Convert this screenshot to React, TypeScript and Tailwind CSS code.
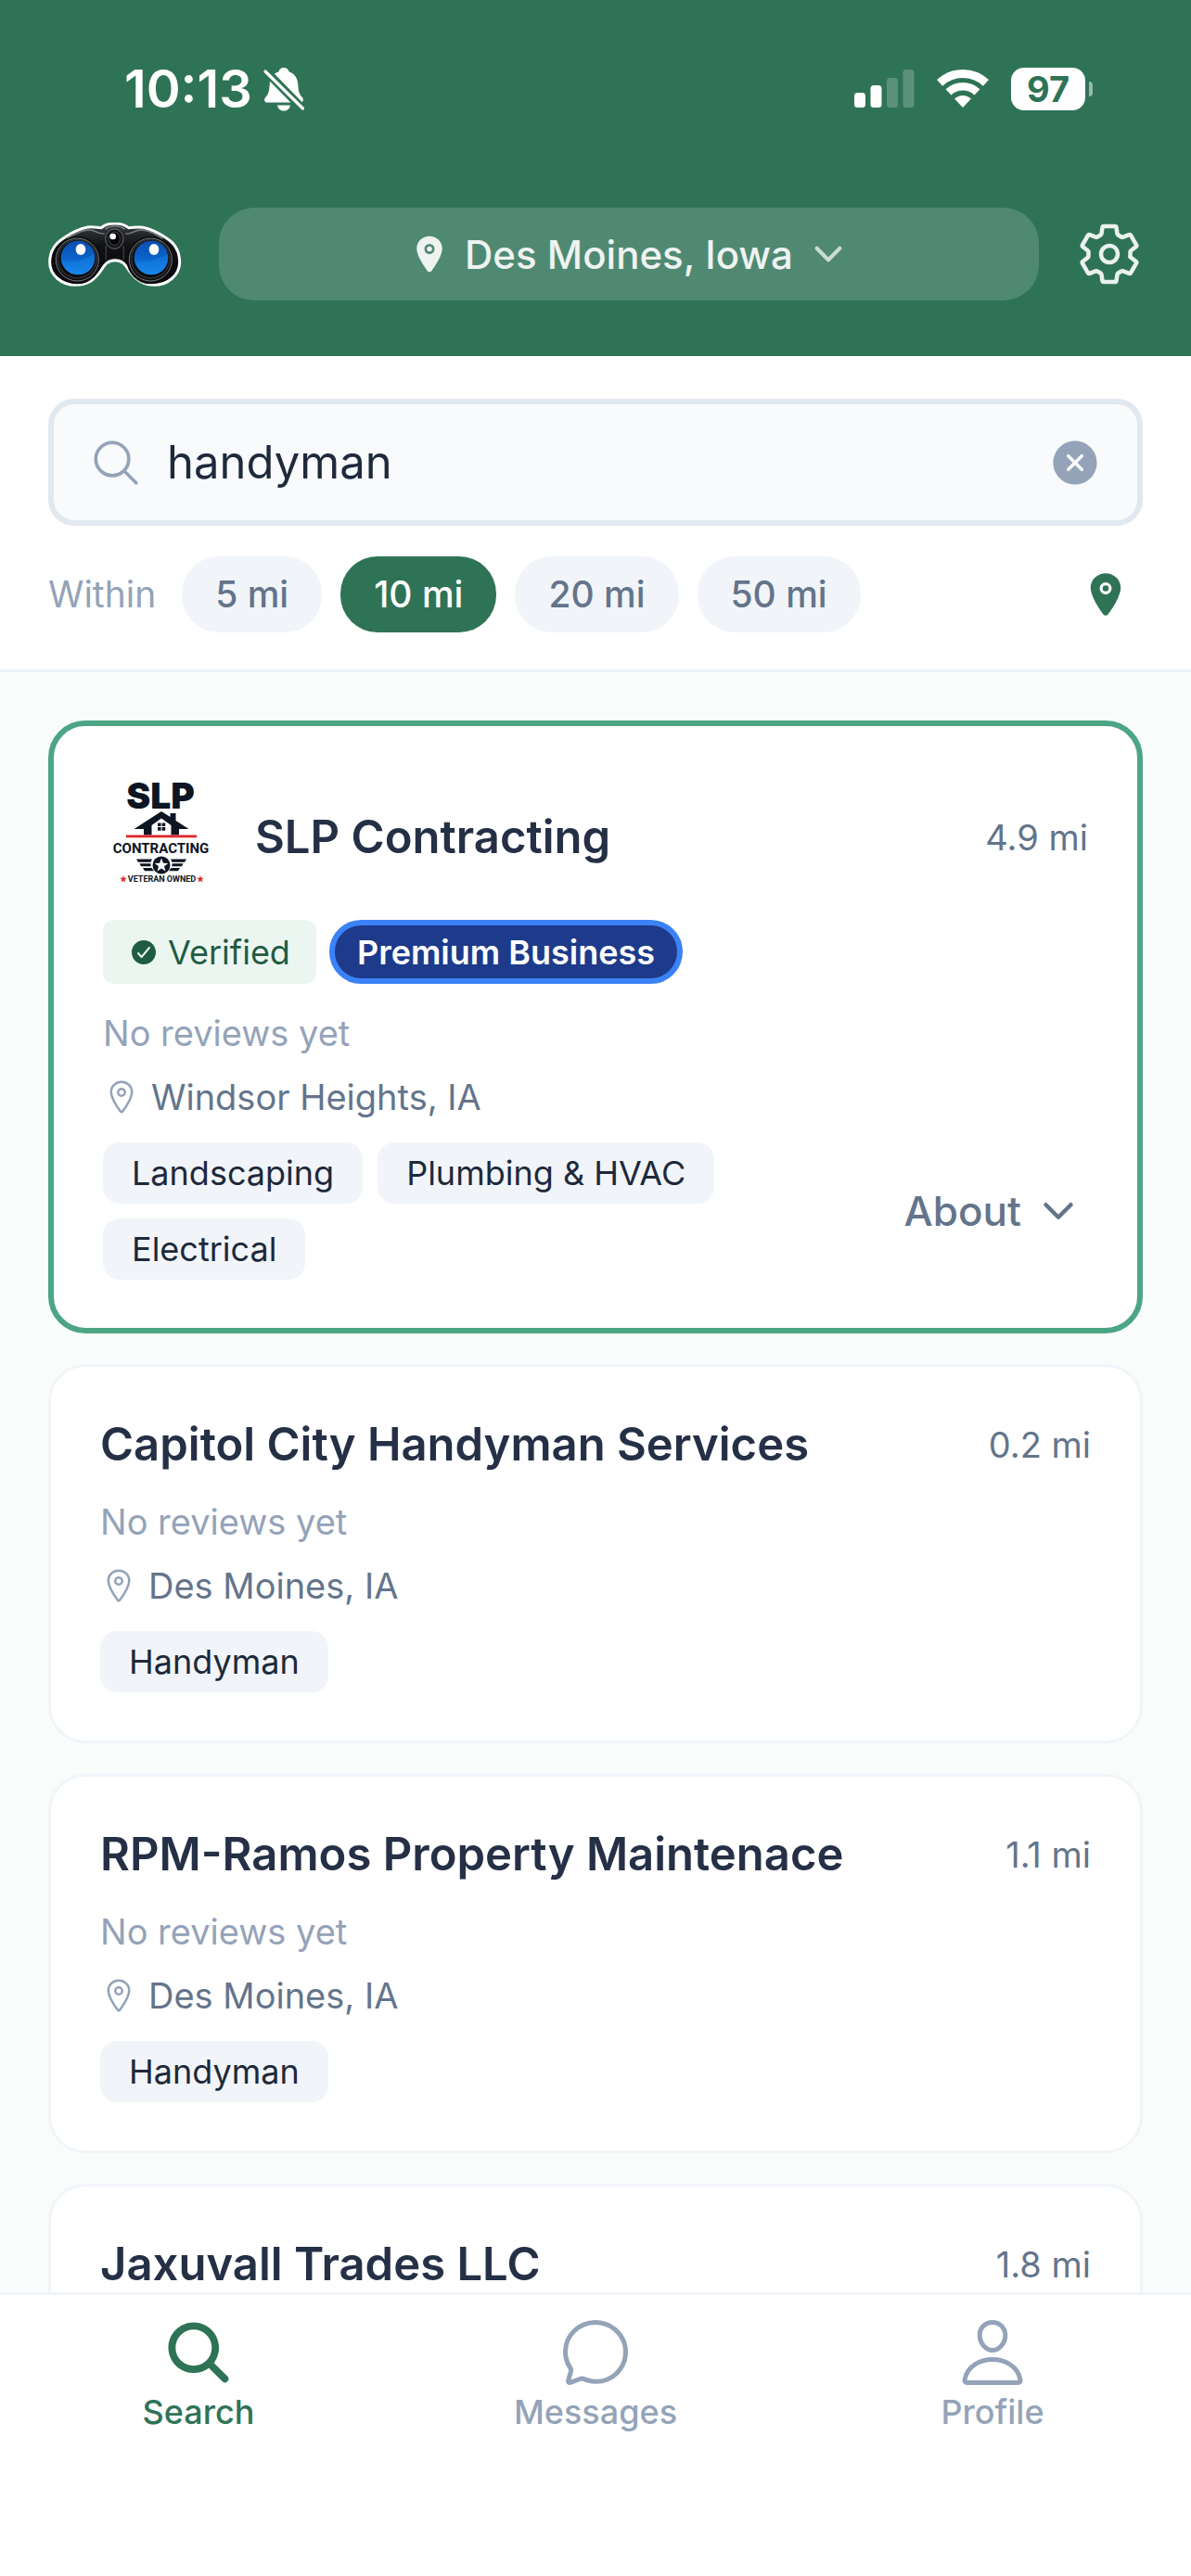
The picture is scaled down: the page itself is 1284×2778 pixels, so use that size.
import { useState } from 'react';
import {
  IoChatbubbleOutline,
  IoCheckmarkCircle,
  IoChevronDown,
  IoCloseCircle,
  IoLocation,
  IoLocationOutline,
  IoPersonOutline,
  IoSearch,
  IoSearchOutline,
  IoSettingsOutline,
} from 'react-icons/io5';

interface Business {
  name: string;
  distance: string;
  city?: string;
  services?: string[];
  featured?: boolean;
}

const businesses: Business[] = [
  {
    name: 'SLP Contracting',
    distance: '4.9 mi',
    city: 'Windsor Heights, IA',
    services: ['Landscaping', 'Plumbing & HVAC', 'Electrical'],
    featured: true,
  },
  {
    name: 'Capitol City Handyman Services',
    distance: '0.2 mi',
    city: 'Des Moines, IA',
    services: ['Handyman'],
  },
  {
    name: 'RPM-Ramos Property Maintenace',
    distance: '1.1 mi',
    city: 'Des Moines, IA',
    services: ['Handyman'],
  },
  {
    name: 'Jaxuvall Trades LLC',
    distance: '1.8 mi',
  },
];

const radii = [5, 10, 20, 50];

const tabs = [
  { label: 'Search', icon: IoSearch },
  { label: 'Messages', icon: IoChatbubbleOutline },
  { label: 'Profile', icon: IoPersonOutline },
];

const BellOff = () => (
  <svg viewBox="0 0 44 47" className="h-[47px] w-11" aria-hidden="true">
    <path
      d="M22 0c3 0 5 1.800 5.500 4.200C34 6.400 37 12 37.300 18c.4 8 1.700 11 4.700 14.200 1.600 1.800 1 5.300-2 5.300H4c-3 0-3.600-3.500-2-5.300C5 29 6.300 26 6.700 18 7 12 10 6.400 16.500 4.200 17 1.800 19 0 22 0z"
      fill="white"
    />
    <path d="M15 40.500h14c-.8 4-3.600 6-7 6s-6.200-2-7-6z" fill="white" />
    <path d="M2 3l41 42" stroke="#2f7357" strokeWidth="9" />
    <path d="M2 4l40.500 40" stroke="white" strokeWidth="3.200" strokeLinecap="round" />
  </svg>
);

const Signal = () => (
  <svg viewBox="0 0 65 42" className="h-[42px] w-[65px]" fill="white" aria-hidden="true">
    <rect x="0" y="25" width="12" height="16" rx="3.500" />
    <rect x="17.500" y="17" width="12" height="24" rx="3.500" />
    <rect x="35" y="9" width="12" height="32" rx="3.500" opacity="0.22" />
    <rect x="52.500" y="0" width="12" height="41" rx="3.500" opacity="0.22" />
  </svg>
);

const Wifi = () => (
  <svg viewBox="0 0 56 42" className="h-[42px] w-14" fill="none" stroke="white" aria-hidden="true">
    <path d="M3.100 14.400A36.500 36.500 0 0 1 52.900 14.400" strokeWidth="9" />
    <path d="M12.500 24.400A22.700 22.700 0 0 1 43.500 24.400" strokeWidth="8.500" />
    <path d="M19.100 31.500A13 13 0 0 1 36.900 31.500L28 41z" fill="white" stroke="none" />
  </svg>
);

const Lens = ({ cx }: { cx: number }) => (
  <g>
    <circle cx={cx} cy="182" r="77" fill="#0b0b0d" />
    <circle cx={cx} cy="180" r="69" fill="none" stroke="#7b7e83" strokeWidth="3" />
    <circle cx={cx} cy="178" r="62" fill="none" stroke="#2c2e31" strokeWidth="5" />
    <circle cx={cx + 2} cy="174" r="55" fill="url(#lens)" />
    <path
      d={`M${cx - 50} 184c26 10 68-2 104-22 6 38-14 65-50 65-30 0-48-16-54-43z`}
      fill="#1482e6"
      opacity="0.5"
    />
    <ellipse cx={cx + 11} cy="147" rx="16" ry="18" fill="white" />
  </g>
);

const Binoculars = () => (
  <svg viewBox="38 60 432 207" className="h-[69px] w-36 shrink-0" role="img" aria-label="Binoculars">
    <defs>
      <linearGradient id="lens" x1="0" y1="0" x2="0" y2="1">
        <stop offset="0" stopColor="#0a4fae" />
        <stop offset="0.5" stopColor="#0a62c8" />
        <stop offset="1" stopColor="#1a8cf0" />
      </linearGradient>
      <linearGradient id="body" x1="0" y1="0" x2="0" y2="1">
        <stop offset="0" stopColor="#3a3c40" />
        <stop offset="0.35" stopColor="#121315" />
        <stop offset="1" stopColor="#050506" />
      </linearGradient>
    </defs>
    <path
      d="M43 188c0-36 16-60 45-78 24-16 50-30 78-35 18-2 32 2 44 2 12-12 28-14 44-14s32 4 44 14c14 0 28-4 46-1 26 5 54 20 76 34 29 18 43 42 43 78 0 42-38 74-83 74-40 0-62-20-80-46-12-18-20-34-46-34s-34 16-46 34c-18 26-40 46-82 46-45 0-83-32-83-74z"
      fill="url(#body)"
      stroke="white"
      strokeWidth="9"
      strokeLinejoin="round"
    />
    <path
      d="M98 112c30-18 50-28 72-28 22 0 28 14 50 12M408 112c-30-18-48-28-70-28-22 0-28 14-50 12"
      fill="none"
      stroke="#7d8085"
      strokeWidth="4"
    />
    <path d="M222 82c18-14 46-14 64 0" fill="none" stroke="#85888d" strokeWidth="4" />
    <path d="M225 135v45M282 135v45" stroke="#3a3c40" strokeWidth="4" />
    <Lens cx={132} />
    <Lens cx={369} />
    <ellipse cx="252" cy="113" rx="29" ry="32" fill="#151618" stroke="#6b6e73" strokeWidth="3" />
    <ellipse cx="252" cy="112" rx="18" ry="21" fill="#050506" stroke="#3f4145" strokeWidth="3" />
    <circle cx="247" cy="105" r="10" fill="white" />
  </svg>
);

const SlpLogo = () => (
  <svg viewBox="0 0 126 132" className="h-[132px] w-[126px] shrink-0" role="img" aria-label="SLP Contracting logo">
    <text x="62" y="35" textAnchor="middle" fontSize="39" fontWeight="900" fill="#0d1522" className="font-['Inter',sans-serif]">
      SLP
    </text>
    <path d="M33.500 57L63 38l9.500 6v-4h6v8L92.500 57H82v6.500h-8.500V53L63 45.500 52.500 53v10.500H44V57z" fill="#0d1522" />
    <path d="M59 50.500h3.600v3.600H59zM63.600 50.500h3.600v3.600h-3.600zM59 55.100h3.600v3.600H59zM63.600 55.100h3.600v3.600h-3.600z" fill="#0d1522" />
    <rect x="25" y="63.500" width="76" height="2.800" fill="#e0262b" />
    <text x="62.500" y="83" textAnchor="middle" fontSize="15" fontWeight="700" fill="#0d1522" className="font-['Roboto',sans-serif]">
      CONTRACTING
    </text>
    <g fill="#0d1522">
      <path d="M36 89.500h17l-1.500 3.300H38zM39.500 94.300h12v3H41zM43 99h9.500l2.500 3.300H45z" />
      <path d="M90 89.500H73l1.500 3.300H88zM86.500 94.300h-12v3H85zM83 99h-9.500l-2.500 3.300H81z" />
      <circle cx="63" cy="96" r="9.500" />
    </g>
    <path d="M63 88.500l1.900 5.200 5.400.2-4.300 3.400 1.500 5.300-4.500-3.100-4.500 3.100 1.500-5.300-4.300-3.400 5.400-.2z" fill="white" />
    <text x="63.500" y="113.500" textAnchor="middle" fontSize="9" fontWeight="700" fill="#0d1522" className="font-['Roboto',sans-serif]">
      VETERAN OWNED
    </text>
    <path
      d="M22 107l1 2.700 2.900.1-2.300 1.800.8 2.800-2.400-1.600-2.400 1.600.8-2.800-2.300-1.800 2.900-.1zM105 107l1 2.700 2.900.1-2.300 1.800.8 2.800-2.400-1.600-2.400 1.600.8-2.800-2.300-1.800 2.900-.1z"
      fill="#e0262b"
    />
  </svg>
);

const StatusBar = () => (
  <div className="flex h-48 items-center justify-between pl-[134px] pr-[106px] text-white">
    <div className="flex items-center gap-3">
      <span className="text-[56px] leading-none font-semibold">10:13</span>
      <BellOff />
    </div>
    <div className="flex items-center gap-6">
      <Signal />
      <Wifi />
      <div className="flex items-center gap-1">
        <span className="flex h-[46px] w-20 items-center justify-center rounded-[14px] bg-white text-[38px] leading-none font-bold text-[#2f7357]">
          97
        </span>
        <span className="h-4 w-1 rounded-r-full bg-white/50" />
      </div>
    </div>
  </div>
);

const BusinessCard = ({ name, distance, city, services, featured }: Business) => (
  <article
    className={
      featured
        ? 'rounded-[40px] border-6 border-[#4ca584] bg-white px-[53px] pt-[54px] pb-[52px]'
        : 'rounded-[40px] border-3 border-[#f1f5f9] bg-white px-[53px] pt-[54px] pb-[52px]'
    }
  >
    <div className="flex items-center">
      {featured && (
        <div className="mr-[38px]">
          <SlpLogo />
        </div>
      )}
      <h2 className="flex-1 text-[49px] leading-[60px] font-semibold text-[#253046]">{name}</h2>
      <span className="text-[38px] leading-[52px] text-[#64748b]">{distance}</span>
    </div>

    {featured && (
      <div className="mt-[23px] flex gap-[14px]">
        <span className="flex h-[69px] items-center gap-[10px] rounded-xl bg-[#ecf6f1] px-7 text-[36px] text-[#1f5c42]">
          <IoCheckmarkCircle className="size-8" />
          Verified
        </span>
        <span className="flex h-[69px] items-center rounded-full border-6 border-[#3b82f6] bg-[#1e3a8a] px-6 text-[36px] font-semibold text-white">
          Premium Business
        </span>
      </div>
    )}

    {city && (
      <>
        <p className="mt-[27px] text-[38px] leading-[52px] text-[#94a3b8]">No reviews yet</p>
        <p className="mt-[17px] flex items-center gap-3 text-[38px] leading-[52px] text-[#64748b]">
          <IoLocationOutline className="size-10 text-[#94a3b8]" />
          {city}
        </p>
      </>
    )}

    {services && (
      <div className="mt-[23px] flex items-center justify-between">
        <ul className="flex flex-1 flex-wrap gap-4">
          {services.map((service) => (
            <li
              key={service}
              className="flex h-[66px] items-center rounded-[18px] bg-[#f1f5f9] px-[31px] text-[36px] text-[#1e293b]"
            >
              {service}
            </li>
          ))}
        </ul>
        {featured && (
          <button type="button" className="flex items-center gap-4 px-2 text-[44px] leading-[52px] font-medium text-[#64748b]">
            About
            <IoChevronDown className="size-12" />
          </button>
        )}
      </div>
    )}
  </article>
);

const App = () => {
  const [query, setQuery] = useState('handyman');
  const [radius, setRadius] = useState(10);
  const [tab, setTab] = useState('Search');

  return (
    <div className="flex h-screen flex-col overflow-hidden bg-[#f8fcfb] font-['Inter',sans-serif]">
      <header className="bg-[#2f7357] pb-[60px]">
        <StatusBar />
        <div className="mt-8 flex items-center gap-10 px-[52px]">
          <Binoculars />
          <button
            type="button"
            className="flex h-[100px] flex-1 items-center justify-center rounded-[38px] bg-white/16 text-[42px] font-medium text-white/90"
          >
            <IoLocation className="mr-4 size-11" />
            Des Moines, Iowa
            <IoChevronDown className="ml-4 size-11 text-white/70" />
          </button>
          <button type="button" aria-label="Settings" className="text-white/90">
            <IoSettingsOutline className="size-[72px]" />
          </button>
        </div>
      </header>

      <section className="border-b-3 border-[#edf2f6] bg-white px-[52px] pt-[46px] pb-10">
        <div className="flex h-[137px] items-center rounded-[28px] border-6 border-[#e2e8f0] bg-[#f8fafc] px-[38px]">
          <IoSearchOutline className="size-[58px] text-[#94a3b8]" />
          <input
            type="text"
            aria-label="Search services"
            value={query}
            onChange={(e) => setQuery(e.target.value)}
            className="ml-[26px] h-full min-w-0 flex-1 bg-transparent text-[49px] text-[#1e293b] outline-none"
          />
          <button type="button" aria-label="Clear search" onClick={() => setQuery('')} className="text-[#94a3b8]">
            <IoCloseCircle className="size-[58px]" />
          </button>
        </div>

        <div className="mt-[33px] flex items-center gap-5">
          <span className="mr-2 text-[39px] text-[#94a3b8]">Within</span>
          {radii.map((value) => (
            <button
              key={value}
              type="button"
              onClick={() => setRadius(value)}
              className={
                value === radius
                  ? 'h-[82px] rounded-[40px] bg-[#2f7357] px-9 text-[39px] font-medium text-white'
                  : 'h-[82px] rounded-[40px] bg-[#f1f5f9] px-9 text-[39px] font-medium text-[#64748b]'
              }
            >
              {value} mi
            </button>
          ))}
          <button type="button" aria-label="Use my location" className="ml-auto px-[14px] text-[#2f7357]">
            <IoLocation className="size-[52px]" />
          </button>
        </div>
      </section>

      <main className="flex min-h-0 flex-1 flex-col gap-[33px] overflow-hidden px-[52px] pt-[52px]">
        {businesses.map((business) => (
          <BusinessCard key={business.name} {...business} />
        ))}
      </main>

      <nav className="grid h-[306px] shrink-0 grid-cols-3 items-start border-t-3 border-[#f1f5f9] bg-white pt-[22px]">
        {tabs.map(({ label, icon: Icon }) => (
          <button
            key={label}
            type="button"
            onClick={() => setTab(label)}
            className={
              tab === label
                ? 'flex flex-col items-center gap-1 text-[36px] leading-10 font-medium text-[#2f7357]'
                : 'flex flex-col items-center gap-1 text-[36px] leading-10 font-medium text-[#94a3b8]'
            }
          >
            <Icon className="size-20" />
            {label}
          </button>
        ))}
      </nav>
    </div>
  );
};

export default App;
